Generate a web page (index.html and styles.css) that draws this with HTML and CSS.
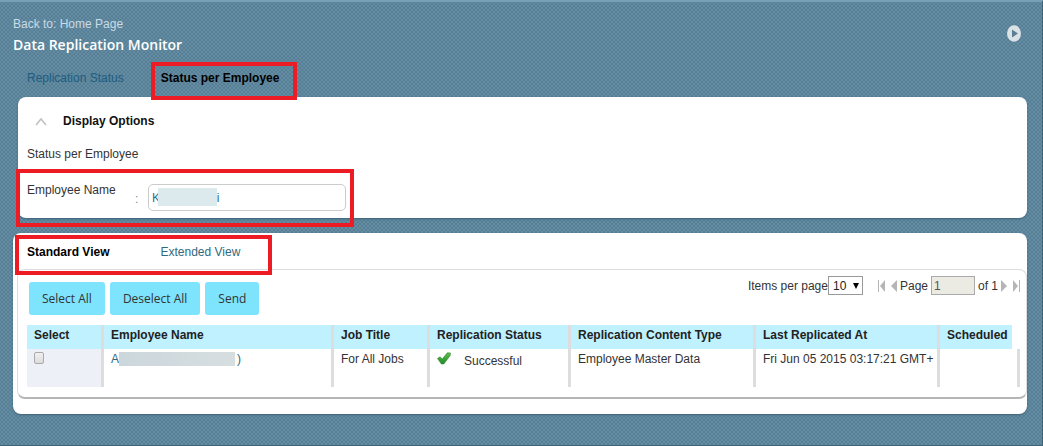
FILE: index.html
```html
<!DOCTYPE html>
<html lang="en">
<head>
  <meta charset="UTF-8">
  <title>Data Replication Monitor</title>
  <link rel="stylesheet" href="styles.css">
</head>
<body>

  <header class="page-header">
    <div>
      <a class="back-link" href="#">Back to: Home Page</a>
      <h1>Data Replication Monitor</h1>
    </div>
    <button type="button" class="expand" aria-label="Expand">
      <svg width="14" height="17" viewBox="0 0 14 17">
        <ellipse cx="7" cy="8.5" rx="7" ry="8.3" fill="#dbe2e6"/>
        <path d="M5 4.5 L11 8.5 L5 12.5 Z" fill="#5a7f94"/>
      </svg>
    </button>
  </header>

  <nav class="tabs">
    <a class="tab" href="#">Replication Status</a>
    <a class="tab active mark mark-tab" href="#">Status per Employee</a>
  </nav>

  <!-- display options -->
  <section class="panel options">
    <div class="options-title">
      <svg width="12" height="9" viewBox="0 0 12 9">
        <path d="M1 8 L6 2 L11 8" fill="none" stroke="#c0c0c0" stroke-width="1.5"/>
      </svg>
      <h2>Display Options</h2>
    </div>
    <p class="options-text">Status per Employee</p>
    <div class="field mark mark-field">
      <label for="employee">Employee Name</label>
      <span class="colon">:</span>
      <div class="input-wrap">
        <input type="text" id="employee" value="K&nbsp;&nbsp;&nbsp;&nbsp;&nbsp;&nbsp;&nbsp;&nbsp;&nbsp;&nbsp;&nbsp;&nbsp;&nbsp;&nbsp;&nbsp;&nbsp;&nbsp;i">
        <span class="redact redact-input"></span>
      </div>
    </div>
  </section>

  <!-- results -->
  <section class="panel results">
    <nav class="views mark mark-views">
      <a class="view active" href="#">Standard View</a>
      <a class="view" href="#">Extended View</a>
    </nav>

    <div class="inner">
      <div class="toolbar">
        <div class="buttons">
          <button type="button" class="btn">Select All</button>
          <button type="button" class="btn">Deselect All</button>
          <button type="button" class="btn">Send</button>
        </div>
        <div class="pager">
          <label for="perPage">Items per page</label>
          <select id="perPage">
            <option>10</option>
          </select>
          <button type="button" class="nav-btn first" aria-label="First page">
            <svg width="8" height="12" viewBox="0 0 8 12"><path d="M0.5 0 V12" stroke="#b5b5b5"/><path d="M7 0 V12 L2 6 Z" fill="#b5b5b5"/></svg>
          </button>
          <button type="button" class="nav-btn" aria-label="Previous page">
            <svg width="6" height="12" viewBox="0 0 6 12"><path d="M6 0 V12 L0 6 Z" fill="#b5b5b5"/></svg>
          </button>
          <label class="page-label" for="page">Page</label>
          <input type="text" id="page" value="1" disabled>
          <span class="page-total">of 1</span>
          <button type="button" class="nav-btn" aria-label="Next page">
            <svg width="6" height="12" viewBox="0 0 6 12"><path d="M0 0 V12 L6 6 Z" fill="#b5b5b5"/></svg>
          </button>
          <button type="button" class="nav-btn last" aria-label="Last page">
            <svg width="8" height="12" viewBox="0 0 8 12"><path d="M1 0 V12 L6 6 Z" fill="#b5b5b5"/><path d="M7.5 0 V12" stroke="#b5b5b5"/></svg>
          </button>
        </div>
      </div>

      <table>
        <colgroup>
          <col class="c-select"><col class="c-name"><col class="c-job"><col class="c-status">
          <col class="c-type"><col class="c-date"><col class="c-sched"><col class="c-end">
        </colgroup>
        <thead>
          <tr>
            <th>Select</th>
            <th>Employee Name</th>
            <th>Job Title</th>
            <th>Replication Status</th>
            <th>Replication Content Type</th>
            <th>Last Replicated At</th>
            <th>Scheduled</th>
            <td></td>
          </tr>
        </thead>
        <tbody>
          <tr>
            <td class="select-cell"><input type="checkbox" aria-label="Select row"></td>
            <td><a class="name" href="#">A<span class="redact redact-name"></span>)</a></td>
            <td>For All Jobs</td>
            <td>
              <div class="status">
                <svg width="14" height="13" viewBox="0 0 14 13">
                  <defs>
                    <linearGradient id="tick" x1="0" y1="0" x2="0" y2="1">
                      <stop offset="0" stop-color="#62c04e"/>
                      <stop offset="1" stop-color="#1f8a25"/>
                    </linearGradient>
                  </defs>
                  <path d="M0.5 6.5 L3 4.8 L5.3 7 L10.3 0.8 L13.5 1 L13.2 3.4 L6.8 12 L4.4 12 Z" fill="url(#tick)" stroke="#2e8a2c" stroke-width="0.6" stroke-linejoin="round"/>
                </svg>
                <span>Successful</span>
              </div>
            </td>
            <td>Employee Master Data</td>
            <td>Fri Jun 05 2015 03:17:21 GMT+</td>
            <td></td>
            <td></td>
          </tr>
        </tbody>
      </table>
    </div>
  </section>

</body>
</html>
```
FILE: styles.css
```css
* {
  box-sizing: border-box;
}

body {
  margin: 0;
  min-height: 100vh;
  padding: 15px 15px 15px 13px;
  border-top: 2px solid #78a1b8;
  border-right: 1px solid #3d6379;
  border-bottom: 1px solid #3d6379;
  background-color: #648ca2;
  background-image:
    radial-gradient(#567f96 1px, transparent 1px),
    radial-gradient(#567f96 1px, transparent 1px);
  background-size: 4px 4px;
  background-position: 0 0, 2px 2px;
  font-family: "Liberation Sans", Arial, sans-serif;
  font-size: 12px;
  line-height: 14px;
  color: #333;
}

a {
  color: #2f6a80;
  text-decoration: none;
}

button {
  border: 0;
  padding: 0;
  background: none;
  cursor: pointer;
}

svg {
  display: block;
}

h1,
h2,
p {
  margin: 0;
}

.page-header {
  display: flex;
  justify-content: space-between;
  align-items: center;
}

.back-link {
  display: block;
  color: #c9dbe5;
}

h1 {
  margin-top: 3px;
  font-family: "Open Sans", "Noto Sans", sans-serif;
  font-size: 14px;
  font-weight: 600;
  line-height: 22px;
  color: #fff;
}

.expand {
  margin: 0 6px 6px 0;
}

.tabs {
  display: flex;
  gap: 37px;
  padding: 15px 0 12px 14px;
}

.tab {
  color: #1d5d80;
}

.tab.active {
  font-weight: bold;
  color: #000;
}

.panel {
  background: #fff;
  border-radius: 8px;
  box-shadow: 0 1px 2px #3f6276;
}

/* red highlight frames */
.mark {
  position: relative;
}

.mark::after {
  content: "";
  position: absolute;
  border: 4px solid #ed1c24;
  pointer-events: none;
}

.mark-tab::after {
  inset: -9px -18px -15px -10px;
}

.mark-field::after {
  inset: -14px -8px -16px -11px;
}

.mark-views::after {
  inset: 2px -32px -6px 2px;
}

/* display options */
.options {
  margin-left: 5px;
  padding: 17px 9px 7px;
}

.options-title {
  display: flex;
  align-items: center;
  gap: 16px;
  padding-left: 8px;
}

h2 {
  font-size: 12px;
  line-height: 14px;
  color: #111;
}

.options-text {
  margin: 19px 0 22px;
}

.field {
  display: inline-flex;
  align-items: flex-start;
  vertical-align: top;
}

.field label {
  width: 108px;
}

.colon {
  width: 13px;
  padding-top: 9px;
  color: #888;
}

.input-wrap {
  position: relative;
  padding-top: 1px;
}

.input-wrap input {
  display: block;
  width: 198px;
  height: 27px;
  padding: 0 3px;
  border: 1px solid #ccc;
  border-radius: 5px;
  font: inherit;
  color: #2f6f93;
}

.redact {
  background: linear-gradient(90deg, #ccd7dc, #d6dee0);
}

.redact-input {
  position: absolute;
  top: 5px;
  left: 10px;
  width: 59px;
  height: 18px;
  background: #dce9ed;
}

.redact-name {
  display: inline-block;
  width: 116px;
  height: 14px;
  margin-right: 2px;
  vertical-align: top;
}

/* results */
.results {
  margin-top: 15px;
  padding-bottom: 15px;
}

.views {
  display: inline-flex;
  gap: 51px;
  padding: 12px 0 10px 14px;
  vertical-align: top;
}

.view.active {
  font-weight: bold;
  color: #000;
}

.inner {
  margin-left: 4px;
  padding: 12px 6px 10px 9px;
  border: 1px solid #ddd;
  border-bottom: 2px solid #b5b5b5;
  border-radius: 8px;
}

.toolbar {
  display: flex;
  justify-content: space-between;
  align-items: flex-start;
  margin-bottom: 10px;
}

.buttons {
  display: flex;
  gap: 5px;
  padding-left: 2px;
}

.btn {
  height: 33px;
  padding: 0 13px;
  border-radius: 3px;
  background: #7ee3fd;
  font-family: "Open Sans", "Noto Sans", sans-serif;
  font-size: 12px;
  color: #333;
}

.pager {
  display: flex;
  align-items: center;
  margin-top: -6px;
}

#perPage {
  appearance: none;
  width: 35px;
  height: 19px;
  margin-right: 15px;
  padding: 0 4px;
  border: 1px solid #999;
  border-radius: 0;
  background: #fff url("data:image/svg+xml,%3Csvg xmlns='http://www.w3.org/2000/svg' width='6' height='6'%3E%3Cpath d='M0 0h6L3 6z'/%3E%3C/svg%3E") no-repeat 24px 6px;
  font: inherit;
  color: #222;
}

.nav-btn.first {
  margin-right: 5px;
}

.nav-btn.last {
  margin-left: 5px;
}

.page-label {
  margin: 0 3px;
}

#page {
  width: 44px;
  height: 19px;
  margin-right: 3px;
  padding: 0 2px;
  border: 1px solid #aaa;
  background: #ebebe4;
  font: inherit;
  color: #555;
}

.page-total {
  margin-right: 3px;
}

table {
  width: 100%;
  border-collapse: separate;
  border-spacing: 0;
  table-layout: fixed;
}

.c-select { width: 77px; }
.c-name { width: 230px; }
.c-job { width: 96px; }
.c-status { width: 141px; }
.c-type { width: 185px; }
.c-date { width: 184px; }
.c-end { width: 8px; }

th,
td {
  padding: 3px 0 7px 7px;
  border-right: 3px solid #ddd;
  text-align: left;
  vertical-align: top;
  white-space: nowrap;
}

th {
  background: #bff1ff;
  color: #222;
}

th:nth-child(7),
tbody td:nth-child(7),
thead td {
  border-right: 0;
}

thead td,
td:last-child {
  padding: 0;
}

tbody td {
  height: 38px;
}

.select-cell {
  background: #edf0f6;
}

.select-cell input {
  appearance: none;
  display: block;
  width: 10px;
  height: 12px;
  margin: 0;
  border: 1px solid #aaa;
  border-radius: 2px;
  background: linear-gradient(#f0f0f0, #dcdcdc);
}

.select-cell input:checked {
  background: #2f6a80;
}

.status {
  display: flex;
  gap: 13px;
}

.status span {
  padding-top: 2px;
}
```
